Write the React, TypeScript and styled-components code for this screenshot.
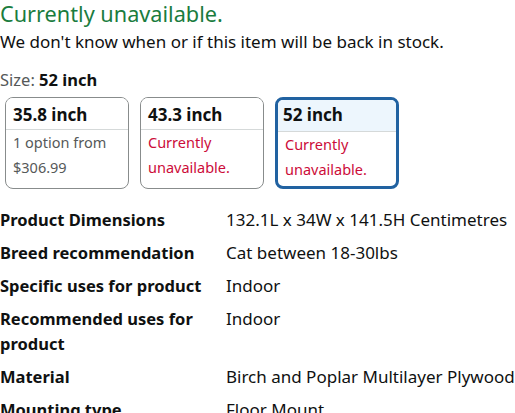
import styled, { createGlobalStyle } from 'styled-components';

const GlobalStyle = createGlobalStyle`
  body {
    margin: 0;
    background: #fff;
    font-family: 'Noto Sans', 'Open Sans', Arial, sans-serif;
    color: #0f1111;
  }
`;

type Option = {
  label: string;
  lines: string[];
  unavailable?: boolean;
  selected?: boolean;
};

const options: Option[] = [
  { label: '35.8 inch', lines: ['1 option from', '$306.99'] },
  { label: '43.3 inch', lines: ['Currently', 'unavailable.'], unavailable: true },
  { label: '52 inch', lines: ['Currently', 'unavailable.'], unavailable: true, selected: true },
];

const details: [string, string][] = [
  ['Product Dimensions', '132.1L x 34W x 141.5H Centimetres'],
  ['Breed recommendation', 'Cat between 18-30lbs'],
  ['Specific uses for product', 'Indoor'],
  ['Recommended uses for product', 'Indoor'],
  ['Material', 'Birch and Poplar Multilayer Plywood'],
  ['Mounting type', 'Floor Mount'],
];

const App = () => (
  <>
    <GlobalStyle />
    <Page>
      <Availability>Currently unavailable.</Availability>
      <Note>We don't know when or if this item will be back in stock.</Note>
      <SizeLine>
        Size: <strong>52 inch</strong>
      </SizeLine>
      <Swatches>
        {options.map((opt) => (
          <Swatch key={opt.label} $selected={opt.selected}>
            <SwatchHead $selected={opt.selected}>{opt.label}</SwatchHead>
            <SwatchBody $unavailable={opt.unavailable}>
              {opt.lines.map((l) => (
                <div key={l}>{l}</div>
              ))}
            </SwatchBody>
          </Swatch>
        ))}
      </Swatches>
      <Specs>
        {details.map(([k, v]) => (
          <SpecRow key={k}>
            <SpecLabel>{k}</SpecLabel>
            <SpecValue>{v}</SpecValue>
          </SpecRow>
        ))}
      </Specs>
    </Page>
  </>
);

const Page = styled.div`
  display: flex;
  flex-direction: column;
`;

const Availability = styled.div`
  color: #1a7c3e;
  font-size: 21.7px;
  line-height: 28px;
`;

const Note = styled.div`
  font-size: 17px;
  line-height: 28px;
`;

const SizeLine = styled.div`
  margin-top: 12px;
  font-size: 16.5px;
  line-height: 24px;
  color: #565959;

  strong {
    color: #0f1111;
    font-weight: 700;
  }
`;

const Swatches = styled.div`
  display: flex;
  gap: 11px;
  margin-top: 5px;
  padding-left: 5px;
`;

const Swatch = styled.div<{ $selected?: boolean }>`
  width: 124px;
  box-sizing: border-box;
  height: 92px;
  border-radius: 8px;
  overflow: hidden;
  border: ${(p) => (p.$selected ? '3px solid #2162a1' : '1px solid #888c8c')};
  display: flex;
  flex-direction: column;
`;

const SwatchHead = styled.div<{ $selected?: boolean }>`
  height: 32px;
  box-sizing: border-box;
  padding: 0 ${(p) => (p.$selected ? '5px' : '7px')};
  padding-top: ${(p) => (p.$selected ? '3px' : '5px')};
  font-size: 17px;
  font-weight: 700;
  line-height: 24px;
  background: ${(p) => (p.$selected ? '#edf6fd' : '#fff')};
  border-bottom: 1px solid #d5d9d9;
`;

const SwatchBody = styled.div<{ $unavailable?: boolean }>`
  padding: 0 7px;
  font-size: 14.5px;
  line-height: 25px;
  color: ${(p) => (p.$unavailable ? '#cc0c39' : '#565959')};
`;

const Specs = styled.div`
  margin-top: 14px;
  display: flex;
  flex-direction: column;
`;

const SpecRow = styled.div`
  display: grid;
  grid-template-columns: 226px 1fr;
  padding: 4px 0;
  line-height: 25px;
`;

const SpecLabel = styled.div`
  font-size: 16.5px;
  font-weight: 700;
  padding-right: 16px;
`;

const SpecValue = styled.div`
  font-size: 17px;
  white-space: nowrap;
`;

export default App;
